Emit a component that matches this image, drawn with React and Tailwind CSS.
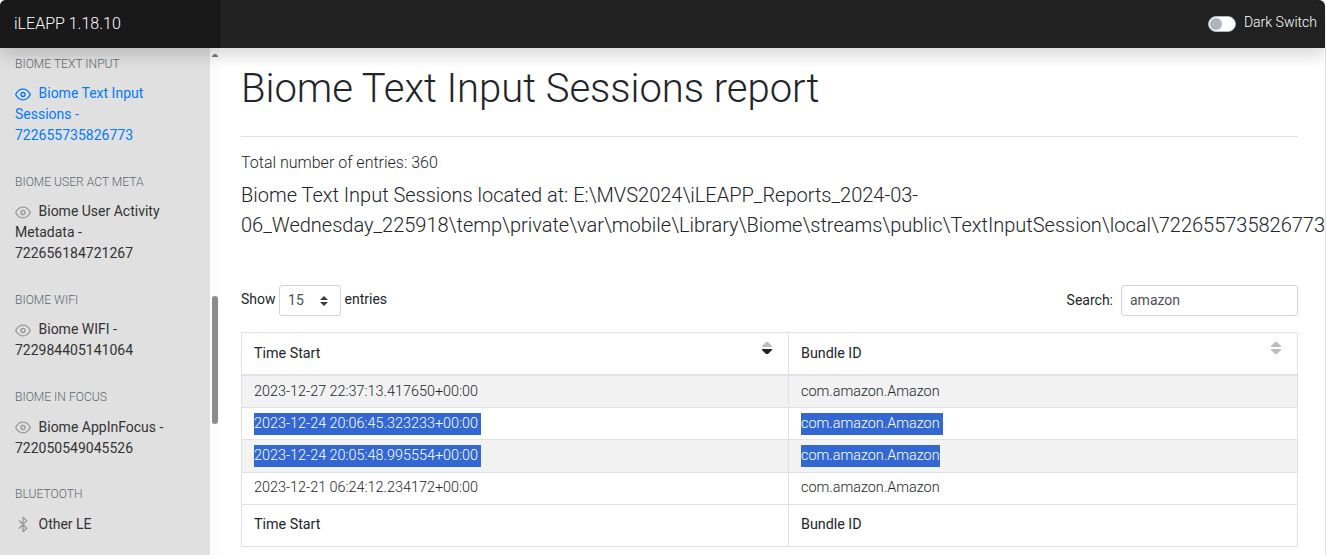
import React from "react";

const sections = [
  { title: "BIOME TEXT INPUT", lines: ["Biome Text Input", "Sessions -", "722655735826773"], active: true },
  { title: "BIOME USER ACT META", lines: ["Biome User Activity", "Metadata -", "722656184721267"] },
  { title: "BIOME WIFI", lines: ["Biome WIFI -", "722984405141064"] },
  { title: "BIOME IN FOCUS", lines: ["Biome AppInFocus -", "722050549045526"] },
  { title: "BLUETOOTH", lines: ["Other LE"], bluetooth: true },
];

const rows = [
  { time: "2023-12-27 22:37:13.417650+00:00", size: "h-[31px] pt-[5px]", stripe: true },
  { time: "2023-12-24 20:06:45.323233+00:00", size: "h-[31px] pt-[5px]", selected: true, trailing: true },
  { time: "2023-12-24 20:05:48.995554+00:00", size: "h-[32px] pt-[5px]", selected: true, stripe: true },
  { time: "2023-12-21 06:24:12.234172+00:00", size: "h-[31px] pt-[4px]" },
];

function FeatherIcon({ bluetooth, active }) {
  return (
    <svg
      viewBox="0 0 24 24"
      className={`mr-[7.5px] inline-block size-4 shrink-0 translate-y-[0.5px] ${active ? "text-[#007bff]" : "text-[#999999]"}`}
      fill="none"
      stroke="currentColor"
      strokeWidth="2"
      strokeLinecap="round"
      strokeLinejoin="round"
    >
      {bluetooth ? (
        <polyline points="6.5 6.5 17.5 17.5 12 23 12 1 17.5 6.5 6.5 17.5" />
      ) : (
        <>
          <path d="M1 12s4-8 11-8 11 8 11 8-4 8-11 8-11-8-11-8z" />
          <circle cx="12" cy="12" r="3" />
        </>
      )}
    </svg>
  );
}

function Section({ title, lines, active, bluetooth }) {
  return (
    <div className="mb-[18.35px]">
      <h6 className="mb-[2.75px] h-[18px] text-[12.1px] leading-[18px] font-light text-[#5f676e]">{title}</h6>
      <div className={`py-2 text-[14px] leading-[21px] font-normal ${active ? "text-[#007bff]" : "text-[#333333]"}`}>
        {lines.map((line, i) => (
          <div key={line} className="flex h-[21px] items-center whitespace-nowrap">
            {i === 0 && <FeatherIcon bluetooth={bluetooth} active={active} />}
            {line}
          </div>
        ))}
      </div>
    </div>
  );
}

function SortMark({ sorted }) {
  return (
    <svg viewBox="0 0 10 12" className="mb-[11px] h-3 w-[10px]">
      <path d="M0 5V4L4 0H6L10 4V5z" fill="#bdbdbd" />
      <path d="M0 7V8L4 12H6L10 8V7z" fill={sorted ? "#212529" : "#bdbdbd"} />
    </svg>
  );
}

function Cell({ children, row, trailing }) {
  return (
    <div className={`px-3 ${row.size}`}>
      <div className={`h-[22px] w-fit leading-[22px] ${row.selected ? "bg-[#3367d1] text-white" : ""} ${row.selected && trailing ? "pr-[3px]" : ""}`}>
        {children}
      </div>
    </div>
  );
}

export default function App() {
  return (
    <div className="flex h-[555px] w-[1326px] flex-col overflow-hidden bg-white font-[Roboto,sans-serif] font-light text-[#212529]">
      <header className="z-10 flex h-12 w-[1325px] shrink-0 overflow-visible rounded-t-[6px] bg-[#212121] shadow-[0_8px_16px_rgba(0,0,0,0.15)]">
        <div className="flex w-[220px] items-center rounded-tl-[6px] border-r border-[#151515] bg-[#191919] pb-px pl-[14px] text-[16px] text-white">
          iLEAPP 1.18.10
        </div>
        <div className="flex flex-1 items-center justify-end pr-2">
          <div className="flex h-4 w-7 items-center rounded-full border border-[#adb5bd] bg-white pl-px">
            <div className="size-3 rounded-full bg-[#adb5bd]" />
          </div>
          <span className="ml-2 pb-1 text-[14px] leading-5 text-white">Dark Switch</span>
        </div>
      </header>
      <div className="flex min-h-0 flex-1">
        <aside className="h-full w-[210px] shrink-0 overflow-hidden bg-[#e0e0e0] pt-[6.5px] pl-[15px]">
          {sections.map((s) => (
            <Section key={s.title} {...s} />
          ))}
        </aside>
        <div className="flex h-full w-[10px] shrink-0 flex-col items-center bg-[#fcfcfc]">
          <svg viewBox="0 0 6 3" className="mt-[6px] h-[3px] w-[6px]">
            <path d="M0 3 V2 L2 0 H4 L6 2 V3z" fill="#7d7d7d" />
          </svg>
          <div className="mt-[239px] h-[128px] w-[6px] rounded-full bg-[#8b8b8b]" />
        </div>
        <main className="flex min-w-0 flex-1 flex-col border-r border-[#e2e2e2] pl-[21px]">
          <h1 className="mt-[17px] h-12 text-[40px] leading-[48px] tracking-[-0.03px] whitespace-nowrap">Biome Text Input Sessions report</h1>
          <div className="mt-[23px] h-px w-[1057px] shrink-0 bg-[#e2e2e2]" />
          <p className="mt-[14px] text-[16px] leading-6">Total number of entries: 360</p>
          <p className="mt-[5px] text-[20px] leading-[30px] tracking-[-0.01px] whitespace-nowrap">
            Biome Text Input Sessions located at: E:\MVS2024\iLEAPP_Reports_2024-03-
            <br />
            06_Wednesday_225918\temp\private\var\mobile\Library\Biome\streams\public\TextInputSession\local\722655735826773
          </p>
          <div className="mt-[45px] flex h-[31px] w-[1057px] items-center justify-between text-[14px] font-normal">
            <div className="flex items-center">
              <span className="pb-[2px]">Show</span>
              <div className="mr-1 ml-[3px] flex h-[31px] w-[62px] items-center justify-between rounded-[3px] border border-[#ced4da] pr-3 pl-[8.5px] text-[#495057]">
                15
                <svg viewBox="0 0 8 10" className="h-[10px] w-2">
                  <path d="M0 4 4 0 8 4zM0 6 4 10 8 6z" fill="#343a40" />
                </svg>
              </div>
              <span className="pb-[2px]">entries</span>
            </div>
            <div className="flex items-center">
              <span>Search:</span>
              <div className="ml-2 flex h-[31px] w-[177px] items-center rounded-[3px] border border-[#ced4da] pl-2 text-[#495057]">amazon</div>
            </div>
          </div>
          <div className="mt-4 w-[1057px] border border-[#dee2e6] text-[14.4px]">
            <div className="grid h-[43px] grid-cols-[547px_1fr] divide-x divide-[#dee2e6] border-b-2 border-[#dee2e6] text-[14.3px] font-normal">
              <div className="flex items-center justify-between pr-4 pl-3">Time Start<SortMark sorted /></div>
              <div className="flex items-center justify-between pr-4 pl-3">Bundle ID<SortMark /></div>
            </div>
            {rows.map((row) => (
              <div
                key={row.time}
                className={`grid grid-cols-[547px_1fr] divide-x divide-[#dee2e6] border-b border-[#dee2e6] ${row.stripe ? "bg-[#f2f2f2]" : ""}`}
              >
                <Cell row={row} trailing>{row.time}</Cell>
                <Cell row={row} trailing={row.trailing}>com.amazon.Amazon</Cell>
              </div>
            ))}
            <div className="grid h-[41px] grid-cols-[547px_1fr] divide-x divide-[#dee2e6] text-[14.3px] font-normal">
              <div className="flex items-center pb-[2px] pl-3">Time Start</div>
              <div className="flex items-center pb-[2px] pl-3">Bundle ID</div>
            </div>
          </div>
        </main>
      </div>
    </div>
  );
}
